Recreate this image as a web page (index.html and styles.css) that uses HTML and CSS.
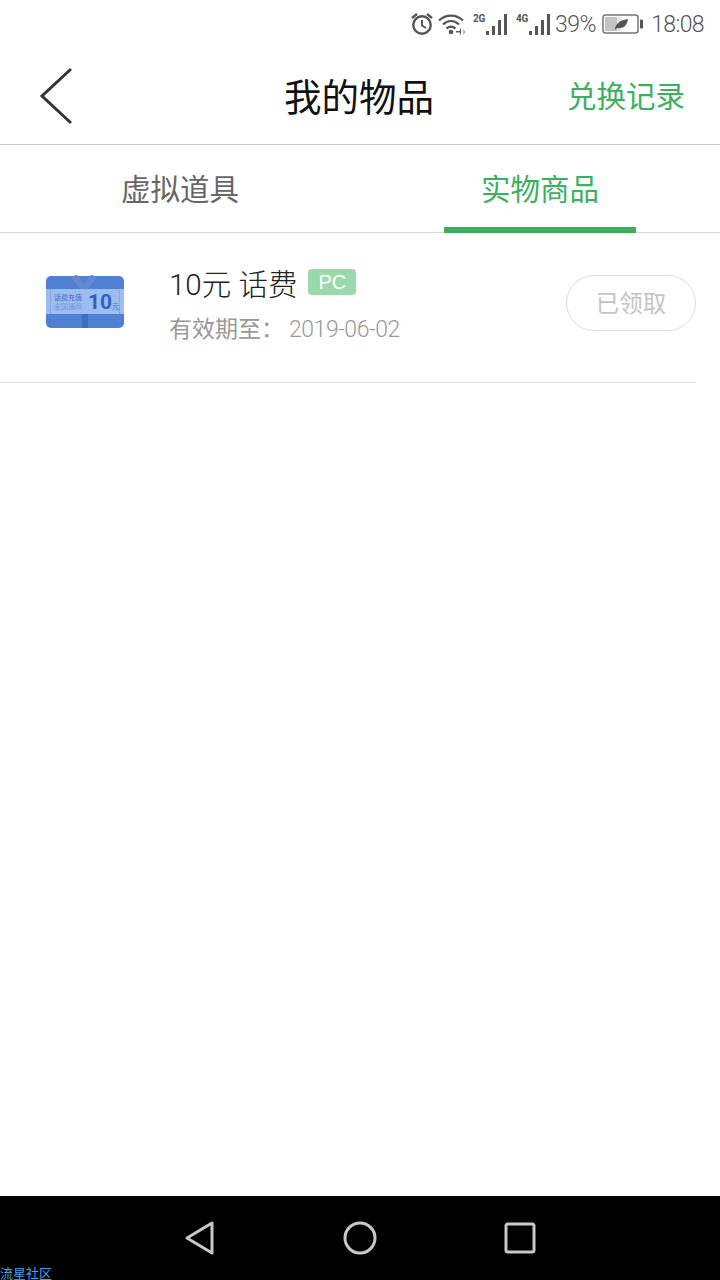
FILE: index.html
```html
<!DOCTYPE html>
<html lang="zh-CN">

<head>
    <meta charset="UTF-8">
    <meta name="viewport" content="width=device-width, initial-scale=1.0">
    <title>我的物品</title>
    <link rel="stylesheet" href="styles.css">
</head>

<body>
    <div class="phone">
        <div class="status-bar">
            <svg class="ico-alarm" width="26" height="24" viewBox="0 0 26 24">
                <circle cx="13" cy="13" r="8.700" fill="none" stroke="#555" stroke-width="2.400" />
                <path d="M13 8v5.500l4 2.500" fill="none" stroke="#555" stroke-width="2" />
                <path d="M3 6l5-4M23 6l-5-4" fill="none" stroke="#555" stroke-width="2.400" />
            </svg>
            <svg class="ico-wifi" width="30" height="24" viewBox="0 0 30 24">
                <path d="M1 8.500C8 2 18 2 25 8.500M5 12.500C10 8 16 8 21 12.500M8.500 16.500C11.500 14 14.500 14 17.500 16.500" fill="none" stroke="#555" stroke-width="2.300" />
                <circle cx="13" cy="20" r="2.300" fill="#555" />
                <path d="M18 19h4v-2.500l1 0v6h-1v-2h-4z" fill="#555" />
                <path d="M25 17l3 3-3 3z" fill="#bbb" />
            </svg>
            <span class="net"><span class="net-label">2G</span><span class="bars"><i class="b1"></i><i class="b2"></i><i class="b3"></i><i class="b4"></i></span></span>
            <span class="net"><span class="net-label">4G</span><span class="bars"><i class="b1"></i><i class="b2"></i><i class="b3"></i><i class="b4"></i></span></span>
            <span class="percent">39%</span>
            <svg class="ico-battery" width="42" height="22" viewBox="0 0 42 22">
                <rect x="1" y="2" width="35" height="18" rx="2.500" fill="#fff" stroke="#777" stroke-width="1.500" />
                <rect x="3" y="4" width="12" height="14" fill="#c4c4c4" />
                <rect x="15" y="4" width="4" height="14" fill="#e6e6e6" />
                <path d="M13 17c0-6 5-10 13-11-1 7-5 10-11 9z" fill="#555" />
                <rect x="38" y="6.500" width="3" height="9" rx="1" fill="#555" />
            </svg>
            <span class="clock">18:08</span>
        </div>

        <header class="top-bar">
            <svg class="back" width="35" height="58" viewBox="0 0 35 58">
                <path d="M32 2L3 29l29 27" fill="none" stroke="#333" stroke-width="3" />
            </svg>
            <h1 class="title">我的物品</h1>
            <a class="history">兑换记录</a>
        </header>

        <nav class="tabs">
            <div class="tab">虚拟道具</div>
            <div class="tab tab-active">实物商品</div>
        </nav>

        <div class="item">
            <svg class="card" width="80" height="54" viewBox="0 0 80 54">
                <rect x="1" y="1" width="78" height="52" rx="5" fill="#5080d4" />
                <path d="M29 1l10 13 10-13" fill="none" stroke="#6388d0" stroke-width="6" />
                <rect x="37" y="38" width="6" height="15" fill="#3f6fc2" />
                <rect x="1" y="14" width="78" height="25" fill="#9dbcf0" />
                <rect x="5" y="14" width="1" height="25" fill="#86a8e6" />
                <rect x="74" y="14" width="1" height="25" fill="#86a8e6" />
                <text class="card-name" x="9" y="25">话费充值</text>
                <text class="card-sub" x="9" y="34">全国通用</text>
                <text class="card-amount" x="43" y="34">10</text>
                <text class="card-unit" x="67" y="34">元</text>
            </svg>
            <div class="item-info">
                <div class="item-name">10元 话费<span class="tag">PC</span></div>
                <div class="item-date">有效期至：<span class="date-num">2019-06-02</span></div>
            </div>
            <button class="claimed">已领取</button>
        </div>

        <div class="spacer"></div>

        <div class="nav-bar">
            <svg width="32" height="36" viewBox="0 0 32 36">
                <path d="M28 3v30L3 18z" fill="none" stroke="#c8c8c8" stroke-width="3" stroke-linejoin="round" />
            </svg>
            <svg width="34" height="34" viewBox="0 0 34 34">
                <circle cx="17" cy="17" r="15" fill="none" stroke="#c8c8c8" stroke-width="3" />
            </svg>
            <svg width="32" height="32" viewBox="0 0 32 32">
                <rect x="2" y="2" width="28" height="28" rx="2" fill="none" stroke="#c8c8c8" stroke-width="3" />
            </svg>
            <span class="watermark">流星社区</span>
        </div>
    </div>
</body>

</html>
```

FILE: styles.css
```css
* {
    box-sizing: border-box;
}

body {
    margin: 0;
    background-color: #fff;
    font-family: "Roboto", "Noto Sans CJK SC", sans-serif;
}

.phone {
    position: relative;
    width: 720px;
    height: 1280px;
    display: flex;
    flex-direction: column;
    overflow: hidden;
}

.status-bar {
    height: 48px;
    display: flex;
    align-items: center;
    justify-content: flex-end;
    padding-right: 16px;
    color: #555;
}

.ico-alarm {
    margin-right: 3px;
}

.ico-wifi {
    margin-right: 3px;
}

.net {
    display: flex;
    align-items: flex-start;
    width: 36px;
    height: 24px;
    margin-right: 7px;
    position: relative;
}

.net:nth-of-type(2) {
    margin-right: 5px;
}

.net-label {
    font-size: 10px;
    font-weight: 700;
    line-height: 11px;
    margin-top: 1px;
    margin-left: 2px;
    letter-spacing: -0.3px;
}

.bars {
    position: absolute;
    right: 0;
    bottom: 1px;
    display: flex;
    align-items: flex-end;
    gap: 3px;
}

.bars i {
    display: block;
    width: 3px;
    background-color: #555;
}

.bars .b1 {
    height: 4px;
}

.bars .b2 {
    height: 9px;
}

.bars .b3 {
    height: 15px;
}

.bars .b4 {
    height: 21px;
}

.percent {
    font-size: 23px;
    font-weight: 300;
    letter-spacing: -0.500px;
    margin-right: 6px;
}

.ico-battery {
    margin-right: 7px;
}

.clock {
    font-size: 23px;
    font-weight: 300;
    letter-spacing: -0.600px;
}

.top-bar {
    position: relative;
    height: 97px;
    border-bottom: 1px solid #c8c8c8;
    display: flex;
    align-items: center;
    justify-content: center;
}

.back {
    position: absolute;
    left: 39px;
    top: 19px;
}

.title {
    margin: 0;
    font-size: 37.500px;
    font-weight: 400;
    color: #111;
    position: relative;
    left: -1px;
    top: -2px;
}

.history {
    position: absolute;
    right: 35px;
    top: 25px;
    font-size: 29.500px;
    line-height: 48px;
    color: #3cb05e;
}

.tabs {
    height: 88px;
    display: flex;
    border-bottom: 1px solid #d8d8d8;
    padding-top: 2px;
}

.tab {
    flex: 1;
    text-align: center;
    font-size: 29.500px;
    line-height: 86px;
    color: #666;
}

.tab-active {
    position: relative;
    color: #3cb05e;
}

.tab-active::after {
    content: "";
    position: absolute;
    left: 84px;
    bottom: -1px;
    width: 192px;
    height: 6px;
    background-color: #3cb05e;
}

.item {
    position: relative;
    height: 150px;
    margin-right: 24px;
    border-bottom: 1px solid #e2e2e2;
    display: flex;
}

.card {
    margin: 42px 0 0 45px;
}

.card-name,
.card-sub,
.card-unit {
    font-size: 7px;
    fill: #3f6fc2;
}

.card-sub {
    fill: #6f97de;
}

.card-amount {
    font-size: 21px;
    font-weight: 700;
    fill: #2f63bd;
}

.item-info {
    margin-left: 44px;
    padding-top: 28px;
}

.item-name {
    display: flex;
    align-items: center;
    gap: 11px;
    height: 42px;
    font-size: 29.500px;
    font-weight: 300;
    color: #222;
    white-space: pre;
}

.tag {
    width: 48px;
    height: 26px;
    border-radius: 4px;
    background-color: #9bd8ac;
    color: #fff;
    font-family: "Liberation Sans", sans-serif;
    font-size: 20px;
    line-height: 26px;
    text-align: center;
}

.item-date {
    margin-top: 10px;
    font-size: 23px;
    line-height: 34px;
    color: #999;
}

.date-num {
    margin-left: 5px;
    font-weight: 300;
    letter-spacing: -0.450px;
}

.claimed {
    position: absolute;
    right: 0;
    top: 42px;
    width: 130px;
    height: 56px;
    padding: 0 0 2px;
    border: 1px solid #ddd;
    border-radius: 28px;
    background-color: #fff;
    color: #c4c4c4;
    font-family: inherit;
    font-size: 23.500px;
}

.spacer {
    flex: 1;
}

.nav-bar {
    position: relative;
    height: 84px;
    background-color: #000;
    display: flex;
    align-items: center;
    justify-content: center;
    gap: 127px;
}

.watermark {
    position: absolute;
    left: 0;
    bottom: -1px;
    font-size: 13px;
    line-height: 14px;
    color: #3fa4e8;
}
```
